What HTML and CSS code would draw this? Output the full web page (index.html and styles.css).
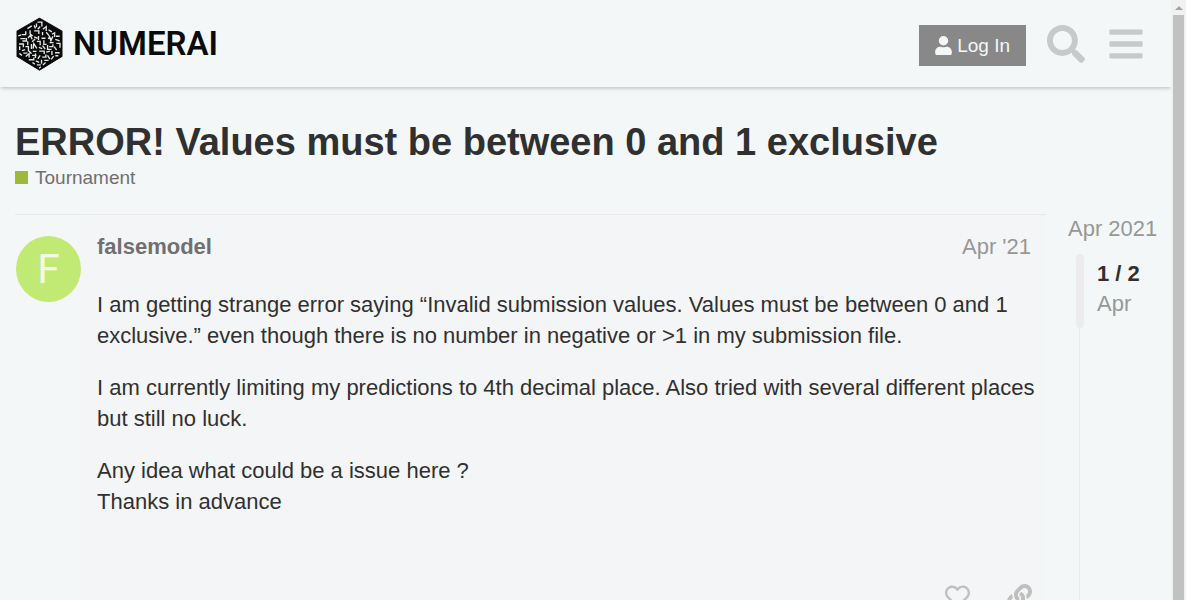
FILE: index.html
```html
<!DOCTYPE html>
<html lang="en">
<head>
<meta charset="utf-8">
<title>ERROR! Values must be between 0 and 1 exclusive - Tournament - Numerai</title>
<link rel="stylesheet" href="styles.css">
</head>
<body>
<div class="page">
  <header class="site-header">
    <a class="brand" href="#" aria-label="Numerai">
      <svg class="brand-mark" viewBox="18 16 140 160" aria-hidden="true">
        <path class="hex" d="M88 19 155 58V133L88 174 21 133V58Z"/>
        <path class="marks" d="M82 31h13v13M79 35v11M65 42l-13 8M72 40l4 10M83 52l7-8M98 52l10-8v13M60 55v11l8 6M72 57h14v9M47 58v10M97 60v10M108 61l9 11M115 54l10 6M125 67l8-4v12M35 68h13M31 80h15M37 87h12v-9M25 72l8-3M54 78l7-8 5 12M72 75l10 4M85 72v12M94 79h12M113 79h10M117 72l5 15 6-14M137 73h11M135 82l13 5M53 88v12M66 89l9-8M80 88h10v12M101 85v12h8M118 92h12M138 94h11v13M27 96h13v10M29 103v11M46 104h9v14M64 96v15M69 110l2-15 9 14M86 106l10 4M97 101l8 10M112 99v13h12M117 104h11v-7M132 104l7 10M36 116l9-3M40 123h12M57 117l7 8M68 118h11M87 117h15v9M108 120l11-3M125 117v12M134 122h14M28 124l8 6M47 133l10-8v11M66 130h13M76 124v14M90 130l-7 10M96 135h11v-8M112 130l7 11M130 132l-7 10M135 131h9M56 143h15v-7M77 146l10 5M94 143v12M102 145h13M106 151l-8 8M80 158h12M67 151l7 5M92 164l-5 4"/>
      </svg>
      <span class="brand-name">NUMERAI</span>
    </a>
    <nav class="header-tools" aria-label="Site">
      <button class="login" type="button">
        <svg class="user-icon" viewBox="0 0 448 512" aria-hidden="true"><path d="M224 256a128 128 0 1 0 0-256 128 128 0 0 0 0 256zm90 32h-17a174 174 0 0 1-146 0h-17C60 288 0 348 0 422v42c0 27 21 48 48 48h352c27 0 48-21 48-48v-42c0-74-60-134-134-134z"/></svg>
        <span>Log In</span>
      </button>
      <button class="tool" type="button" aria-label="Search">
        <svg class="tool-icon" viewBox="0 0 512 512" aria-hidden="true"><path d="M505 442.700 405.300 343c-4.500-4.500-10.600-7-17-7H372c27.600-35.300 44-79.700 44-128C416 93.100 322.900 0 208 0S0 93.100 0 208s93.100 208 208 208c48.300 0 92.700-16.400 128-44v16.300c0 6.400 2.500 12.500 7 17l99.700 99.700c9.400 9.400 24.600 9.400 33.900 0l28.300-28.300c9.400-9.400 9.400-24.600.1-34zM208 336c-70.700 0-128-57.200-128-128 0-70.700 57.200-128 128-128 70.700 0 128 57.200 128 128 0 70.700-57.200 128-128 128z"/></svg>
      </button>
      <button class="tool" type="button" aria-label="Menu">
        <svg class="tool-icon" viewBox="0 0 512 512" aria-hidden="true"><path d="M48 132h416c9 0 16-7 16-16V76c0-9-7-16-16-16H48c-9 0-16 7-16 16v40c0 9 7 16 16 16zm0 160h416c9 0 16-7 16-16v-40c0-9-7-16-16-16H48c-9 0-16 7-16 16v40c0 9 7 16 16 16zm0 160h416c9 0 16-7 16-16v-40c0-9-7-16-16-16H48c-9 0-16 7-16 16v40c0 9 7 16 16 16z"/></svg>
      </button>
    </nav>
  </header>
  <main class="topic">
    <h1 class="title">ERROR! Values must be between 0 and 1 exclusive</h1>
    <a class="category" href="#"><span class="swatch"></span>Tournament</a>
    <div class="columns">
      <article class="post">
        <div class="avatar-column">
          <a class="avatar" href="#" aria-label="falsemodel profile">F</a>
        </div>
        <div class="post-body">
          <div class="post-meta">
            <a class="author" href="#">falsemodel</a>
            <a class="date" href="#">Apr '21</a>
          </div>
          <div class="message">
            <p>I am getting strange error saying “Invalid submission values. Values must be between 0 and 1 exclusive.” even though there is no number in negative or &gt;1 in my submission file.</p>
            <p>I am currently limiting my predictions to 4th decimal place. Also tried with several different places but still no luck.</p>
            <p>Any idea what could be a issue here ?<br>Thanks in advance</p>
          </div>
          <div class="post-actions">
            <button class="action" type="button" aria-label="Like">
              <svg class="action-icon" viewBox="0 0 512 512" aria-hidden="true"><path d="M458.400 64.300C400.600 15.700 311.300 23 256 79.300 200.700 23 111.400 15.600 53.600 64.300-21.600 127.600-10.600 230.800 43 285.500l175.400 178.700c10 10.200 23.400 15.900 37.600 15.900 14.300 0 27.600-5.600 37.600-15.800L469 285.600c53.500-54.700 64.700-157.900-10.600-221.300zm-23.600 187.500L259.400 430.500c-2.400 2.400-4.400 2.400-6.800 0L77.200 251.800c-36.500-37.200-43.900-107.600 7.300-150.700 38.900-32.700 98.900-27.800 136.500 10.500l35 35.700 35-35.700c37.800-38.500 97.800-43.200 136.500-10.600 51.100 43.100 43.500 113.900 7.300 150.800z"/></svg>
            </button>
            <button class="action" type="button" aria-label="Copy link">
              <svg class="action-icon" viewBox="0 0 512 512" aria-hidden="true"><path d="M326.612 185.391c59.747 59.809 58.927 155.698.36 214.590-.11.120-.24.250-.36.370l-67.200 67.200c-59.270 59.270-155.699 59.262-214.960 0-59.270-59.260-59.270-155.700 0-214.960l37.106-37.106c9.840-9.840 26.786-3.300 27.294 10.606.648 17.722 3.826 35.527 9.690 52.721 1.986 5.822.567 12.262-3.783 16.612l-13.087 13.087c-28.026 28.026-28.905 73.660-1.155 101.960 28.024 28.579 74.086 28.749 102.325.510l67.200-67.190c28.191-28.191 28.073-73.757 0-101.830-3.701-3.694-7.429-6.564-10.341-8.569a16.037 16.037 0 0 1-6.947-12.606c-.396-10.567 3.348-21.456 11.698-29.806l21.054-21.055c5.521-5.521 14.182-6.199 20.584-1.731a152.482 152.482 0 0 1 20.522 17.197zM467.547 44.449c-59.261-59.262-155.690-59.270-214.960 0l-67.200 67.200c-.12.120-.25.250-.36.370-58.566 58.892-59.387 154.781.36 214.590a152.454 152.454 0 0 0 20.521 17.196c6.402 4.468 15.064 3.789 20.584-1.731l21.054-21.055c8.350-8.350 12.094-19.239 11.698-29.806a16.037 16.037 0 0 0-6.947-12.606c-2.912-2.005-6.640-4.875-10.341-8.569-28.073-28.073-28.191-73.639 0-101.830l67.200-67.190c28.239-28.239 74.300-28.069 102.325.510 27.750 28.300 26.872 73.934-1.155 101.960l-13.087 13.087c-4.350 4.350-5.769 10.790-3.783 16.612 5.864 17.194 9.042 34.999 9.690 52.721.509 13.906 17.454 20.446 27.294 10.606l37.106-37.106c59.271-59.259 59.271-155.699.001-214.959z"/></svg>
            </button>
          </div>
        </div>
      </article>
      <aside class="timeline" aria-label="Topic timeline">
        <a class="start-date" href="#">Apr 2021</a>
        <div class="track">
          <div class="position">
            <span class="handle"></span>
            <div class="position-text"><strong>1 / 2</strong><span>Apr</span></div>
          </div>
        </div>
      </aside>
    </div>
  </main>
</div>
<div class="scrollbar" aria-hidden="true"><span class="scroll-up"></span><span class="scroll-thumb"></span></div>
</body>
</html>
```
FILE: styles.css
```css
* { box-sizing: border-box; }
body {
  margin: 0;
  height: 100vh;
  overflow: hidden;
  display: grid;
  grid-template-columns: minmax(0, 1fr) 15px;
  background: #f3f7f8;
  color: #303030;
  font: 22px/31px "Liberation Sans", Arial, sans-serif;
}
a { color: inherit; text-decoration: none; }
button { border: 0; padding: 0; background: none; font: inherit; }
svg { display: block; fill: currentColor; }

.page { min-width: 0; overflow: hidden; }
.site-header {
  display: flex;
  justify-content: space-between;
  align-items: center;
  height: 87px;
  padding: 0 25px 0 16px;
  box-shadow: 0 2px 4px -1px rgba(0, 0, 0, .25);
}
.brand { display: flex; align-items: center; gap: 10px; color: #0a0a0a; }
.brand-mark { width: 47px; height: 54px; }
.brand-mark .hex { stroke: #0a0a0a; stroke-width: 3; stroke-linejoin: round; }
.brand-mark .marks { fill: none; stroke: #e4e6e7; stroke-width: 4; }
.brand-name { font: 600 33px/36px Roboto, sans-serif; }
.header-tools { display: flex; align-items: center; gap: 20px; color: #c8c9ca; }
.login {
  display: flex;
  align-items: center;
  gap: 5px;
  height: 41px;
  padding: 0 16px;
  margin-top: 4px;
  background: #888;
  color: #f3f7f8;
  font-size: 19px;
}
.user-icon { width: 17px; height: 19px; }
.tool { color: inherit; }
.tool-icon { width: 40px; height: 38px; }

.topic { padding: 32px 15px 0; }
.title { margin: 0; font-size: 38px; line-height: 46px; }
.category {
  display: flex;
  width: fit-content;
  align-items: center;
  gap: 7px;
  color: #6f6f6f;
  font-size: 19px;
  line-height: 25px;
}
.swatch { width: 13px; height: 13px; background: #9eb83b; }
.columns {
  display: grid;
  grid-template-columns: minmax(0, 1fr) 88px;
  gap: 22px;
  margin-top: 24px;
}
.post {
  display: grid;
  grid-template-columns: 66px minmax(0, 1fr);
  border-top: 1px solid #e9e9ea;
}
.avatar-column { padding: 21px 0 0 1px; }
.avatar {
  display: grid;
  place-items: center;
  width: 65px;
  height: 66px;
  border-radius: 50%;
  background: #c1ea74;
  color: #f3fbe3;
  font: 41px/66px Roboto, sans-serif;
}
.post-body { padding: 16px 0 40px 16px; background: #f4f5f7; }
.post-meta { display: flex; justify-content: space-between; padding-right: 15px; }
.author { color: #6f706f; font-weight: 700; }
.date, .timeline { color: #979797; }
.message { padding-top: 27px; }
.message p { margin: 0 0 21px; }
.post-actions {
  display: flex;
  justify-content: flex-end;
  gap: 37px;
  padding: 46px 14px 0 0;
  color: #bfbfc0;
}
.action { color: inherit; }
.action-icon { width: 25px; height: 25px; }

.timeline { white-space: nowrap; }
.start-date { display: block; line-height: 30px; }
.track {
  height: 400px;
  margin: 10px 0 0 11px;
  border-left: 1px solid #e8eaeb;
}
.position { display: flex; gap: 13px; margin-left: -4px; }
.handle { width: 8px; height: 74px; border-radius: 4px; background: #ececec; }
.position-text { display: grid; align-content: start; padding-top: 5px; line-height: 30px; }
.position-text strong { color: #303030; }

.scrollbar {
  display: grid;
  grid-template-rows: 15px 1fr;
  justify-items: center;
  background: #f1f1f1;
}
.scroll-up {
  align-self: center;
  border: 4px solid transparent;
  border-top: 0;
  border-bottom-color: #a3a3a3;
}
.scroll-thumb { width: 11px; background: #c1c1c1; }
```
